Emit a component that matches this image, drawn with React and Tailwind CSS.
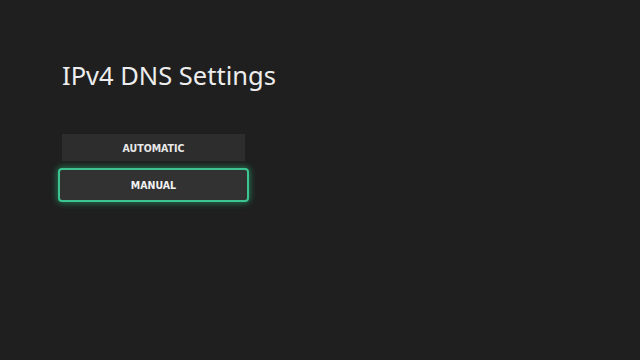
import React from "react";

const options = ["AUTOMATIC", "MANUAL"];

export default function App() {
  const selected = "MANUAL";

  return (
    <div className="w-[640px] h-[360px] bg-[#1f1f1f] overflow-hidden font-['Noto_Sans',sans-serif]">
      <div className="pl-[62px] pt-[58px]">
        <h1 className="text-[25.5px] leading-[34px] text-[#ededed] font-normal">
          IPv4 DNS Settings
        </h1>

        <div className="mt-[42px] flex flex-col w-[183px]">
          {options.map((opt) =>
            opt === selected ? (
              <div key={opt} className="mt-[7px] -mx-[4px] h-[34px] rounded-[4px] border-2 border-[#3cc591] bg-[#323232] shadow-[0_0_6px_1px_rgba(40,190,130,0.55)] flex items-center justify-center">
                <span className="pt-[2px] text-[10.5px] font-bold text-[#f2f2f2] font-['DejaVu_Sans_Condensed','DejaVu_Sans',sans-serif]">
                  {opt}
                </span>
              </div>
            ) : (
              <div key={opt} className="h-[27px] bg-[#2d2d2d] flex items-center justify-center">
                <span className="pt-[2px] text-[10.5px] font-bold text-[#e8e8e8] font-['DejaVu_Sans_Condensed','DejaVu_Sans',sans-serif]">
                  {opt}
                </span>
              </div>
            )
          )}
        </div>
      </div>
    </div>
  );
}
